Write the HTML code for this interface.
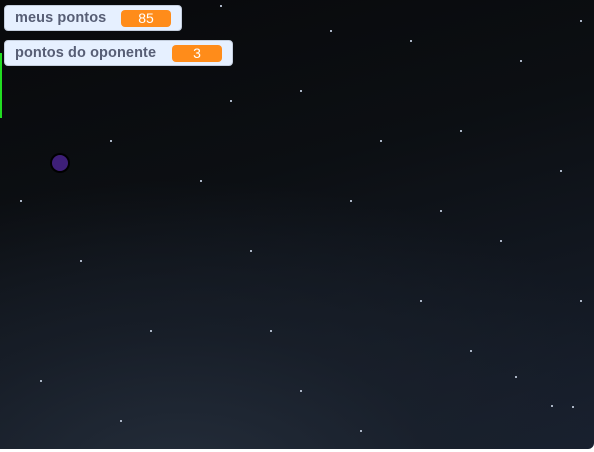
<!DOCTYPE html>
<html><head><style>
body{margin:0;width:594px;height:452px;overflow:hidden;background:#fff;font-family:"Liberation Sans",sans-serif}
#st{position:absolute;left:0;top:0;width:594px;height:449px;border-radius:0 0 6px 0;overflow:hidden;
background:radial-gradient(ellipse 520px 300px at 180px 480px,rgba(36,45,58,1) 0%,rgba(26,33,44,0.7) 50%,rgba(20,26,36,0) 100%),linear-gradient(165deg,#08090b 0%,#0c0f13 40%,#131923 75%,#182030 100%)}
.m{position:absolute;left:4px;height:26px;background:#e6f0ff;border:1px solid #c4cedd;border-radius:4px;box-sizing:border-box}
.m span{position:absolute;left:10px;top:4px;font-size:14.5px;font-weight:700;color:#575e75;letter-spacing:0.1px}
.v{position:absolute;top:4px;height:17px;width:50px;background:#ff8c1a;border-radius:4px;color:#fff;text-align:center;font-size:14px;line-height:17px}
</style></head><body>
<div id="st">
<svg width="594" height="449" style="position:absolute;left:0;top:0" fill="#aab4c4">
<rect x="410" y="40" width="2" height="2"/><rect x="520" y="60" width="2" height="2"/><rect x="300" y="90" width="2" height="2"/>
<rect x="220" y="5" width="2" height="2"/><rect x="460" y="130" width="2" height="2"/><rect x="560" y="170" width="2" height="2"/>
<rect x="110" y="140" width="2" height="2"/><rect x="350" y="200" width="2" height="2"/><rect x="250" y="250" width="2" height="2"/>
<rect x="420" y="300" width="2" height="2"/><rect x="150" y="330" width="2" height="2"/><rect x="300" y="390" width="2" height="2"/>
<rect x="551" y="405" width="2" height="2"/><rect x="572" y="406" width="2" height="2"/><rect x="515" y="376" width="2" height="2"/>
<rect x="80" y="260" width="2" height="2"/><rect x="200" y="180" width="2" height="2"/><rect x="380" y="140" width="2" height="2"/>
<rect x="500" y="240" width="2" height="2"/><rect x="580" y="300" width="2" height="2"/><rect x="40" y="380" width="2" height="2"/>
<rect x="270" y="330" width="2" height="2"/><rect x="470" y="350" width="2" height="2"/><rect x="20" y="200" width="2" height="2"/>
<rect x="330" y="30" width="2" height="2"/><rect x="580" y="20" width="2" height="2"/><rect x="120" y="420" width="2" height="2"/>
<rect x="230" y="100" width="2" height="2"/><rect x="440" y="210" width="2" height="2"/><rect x="360" y="430" width="2" height="2"/>
</svg>
<div style="position:absolute;left:0;top:53px;width:2px;height:65px;background:#22dd22"></div>
<div style="position:absolute;left:52px;top:155px;width:16px;height:16px;border-radius:50%;background:#3e1f78;box-shadow:0 0 0 2px #000"></div>
<div class="m" style="top:5px;width:178px"><span>meus pontos</span><div class="v" style="left:116px">85</div></div>
<div class="m" style="top:40px;width:229px"><span>pontos do oponente</span><div class="v" style="left:167px">3</div></div>
</div>
</body></html>
